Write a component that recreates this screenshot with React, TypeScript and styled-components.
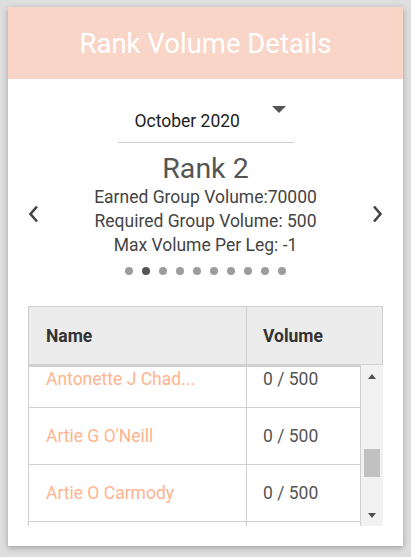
import { useEffect, useRef } from "react";
import styled, { createGlobalStyle } from "styled-components";

// the 4th row is only peeking in at the bottom edge, so it carries no text
const rows = [
    { id: 1, name: "Antonette J Chad...", volume: "0 / 500" },
    { id: 2, name: "Artie G O'Neill", volume: "0 / 500" },
    { id: 3, name: "Artie O Carmody", volume: "0 / 500" },
    { id: 4, name: "", volume: "" },
];

const DOTS = 10;
const ACTIVE_DOT = 1;

export default function App() {
    const bodyRef = useRef<HTMLDivElement>(null);

    useEffect(() => {
        if (bodyRef.current) {
            bodyRef.current.scrollTop = 16;
        }
    }, []);

    return (
        <>
            <GlobalStyle />
            <Card>
                <Header>
                    <Title>Rank Volume Details</Title>
                </Header>
                <Content>
                    <Select>
                        <SelectValue>October 2020</SelectValue>
                        <SelectArrow />
                    </Select>
                    <Carousel>
                        <NavButton aria-label="previous">
                            <svg width="12" height="18" viewBox="0 0 12 18">
                                <polyline points="9,1.5 2.5,9 9,16.5" fill="none" stroke="#444" strokeWidth="2.6" />
                            </svg>
                        </NavButton>
                        <Slide>
                            <RankName>Rank 2</RankName>
                            <InfoLine>Earned Group Volume:70000</InfoLine>
                            <InfoLine>Required Group Volume: 500</InfoLine>
                            <InfoLine>Max Volume Per Leg: -1</InfoLine>
                            <Dots>
                                {Array.from({ length: DOTS }).map((_, i) => (
                                    <Dot key={i} $active={i === ACTIVE_DOT} />
                                ))}
                            </Dots>
                        </Slide>
                        <NavButton aria-label="next">
                            <svg width="12" height="18" viewBox="0 0 12 18">
                                <polyline points="3,1.5 9.5,9 3,16.5" fill="none" stroke="#444" strokeWidth="2.6" />
                            </svg>
                        </NavButton>
                    </Carousel>
                    <Table>
                        <HeadRow>
                            <HeadCell $divider>Name</HeadCell>
                            <HeadCell>Volume</HeadCell>
                        </HeadRow>
                        <BodyWrap>
                            <Body ref={bodyRef}>
                                {rows.map((row) => (
                                    <Row key={row.id}>
                                        <NameCell>{row.name}</NameCell>
                                        <VolumeCell>{row.volume}</VolumeCell>
                                    </Row>
                                ))}
                            </Body>
                            <Scrollbar>
                                <ScrollButton>
                                    <ArrowUp />
                                </ScrollButton>
                                <Track>
                                    <Thumb $offset={62} />
                                </Track>
                                <ScrollButton>
                                    <ArrowDown />
                                </ScrollButton>
                            </Scrollbar>
                        </BodyWrap>
                    </Table>
                </Content>
            </Card>
        </>
    );
}

const GlobalStyle = createGlobalStyle`
    html, body {
        margin: 0;
        padding: 0;
        background: #dedede;
        font-family: Roboto, "Liberation Sans", sans-serif;
    }
    body {
        padding: 7px 8px 9px 8px;
    }
`;

const Card = styled.div`
    width: 395px;
    background: #fff;
    box-shadow: 0 2px 6px rgba(0, 0, 0, 0.28);
`;

const Header = styled.div`
    height: 72px;
    background: #f8d5c7;
    display: flex;
    align-items: center;
    justify-content: center;
`;

const Title = styled.h1`
    margin: 0;
    font-size: 27.5px;
    font-weight: 400;
    color: #fff;
`;

const Content = styled.div`
    padding: 0 20px 20px;
    display: flex;
    flex-direction: column;
    align-items: stretch;
`;

const Select = styled.div`
    position: relative;
    align-self: center;
    width: 176px;
    margin-top: 18px;
    padding: 12px 0 9px 17px;
    box-sizing: border-box;
    border-bottom: 1px solid #cfcfcf;
`;

const SelectValue = styled.div`
    font-size: 17.5px;
    line-height: 24px;
    color: #222;
`;

const SelectArrow = styled.span`
    position: absolute;
    right: 8px;
    top: 9px;
    width: 0;
    height: 0;
    border-left: 7px solid transparent;
    border-right: 7px solid transparent;
    border-top: 7px solid #555;
`;

const Carousel = styled.div`
    display: flex;
    align-items: center;
    justify-content: space-between;
    height: 158px;
    padding: 10px 0 26px;
    box-sizing: border-box;
`;

const NavButton = styled.button`
    border: 0;
    background: none;
    padding: 0;
    width: 12px;
    height: 18px;
    display: flex;
    cursor: pointer;
`;

const Slide = styled.div`
    display: flex;
    flex-direction: column;
    align-items: center;
    color: #444;
`;

const RankName = styled.div`
    font-size: 28.5px;
    line-height: 32px;
    color: #555;
`;

const InfoLine = styled.div`
    font-size: 17.5px;
    line-height: 24px;
`;

const Dots = styled.div`
    display: flex;
    gap: 9px;
    margin-top: 10px;
`;

const Dot = styled.span<{ $active?: boolean }>`
    width: 8px;
    height: 8px;
    border-radius: 50%;
    background: ${(p) => (p.$active ? "#555" : "#9d9d9d")};
`;

const Table = styled.div`
    margin-top: 5px;
    display: flex;
    flex-direction: column;
`;

const HeadRow = styled.div`
    display: grid;
    grid-template-columns: 218px 1fr;
    height: 57px;
    background: #ececec;
    border: 1px solid #d0d0d0;
`;

const HeadCell = styled.div<{ $divider?: boolean }>`
    display: flex;
    align-items: center;
    padding-left: ${(p) => (p.$divider ? "17px" : "16px")};
    font-size: 17.5px;
    font-weight: 700;
    color: #333;
    border-right: ${(p) => (p.$divider ? "1px solid #d0d0d0" : "none")};
`;

const BodyWrap = styled.div`
    display: flex;
    height: 161px;
`;

const Body = styled.div`
    width: 333px;
    box-sizing: border-box;
    border-top: 2px solid #d0d0d0;
    border-left: 1px solid #d0d0d0;
    border-right: 1px solid #d0d0d0;
    overflow-y: scroll;
    scrollbar-width: none;
    &::-webkit-scrollbar {
        display: none;
    }
`;

const Row = styled.div`
    display: grid;
    grid-template-columns: 218px 1fr;
    height: 57px;
    box-sizing: border-box;
    border-bottom: 1px solid #d0d0d0;
    font-size: 17.5px;
`;

const NameCell = styled.div`
    display: flex;
    align-items: center;
    padding-left: 17px;
    color: #ffb48e;
    border-right: 1px solid #d0d0d0;
    white-space: nowrap;
`;

const VolumeCell = styled.div`
    display: flex;
    align-items: center;
    padding-left: 16px;
    color: #555;
`;

const Scrollbar = styled.div`
    width: 22px;
    background: #f1f1f1;
    display: flex;
    flex-direction: column;
`;

const ScrollButton = styled.div`
    height: 22px;
    display: flex;
    align-items: center;
    justify-content: center;
`;

const ArrowUp = styled.span`
    width: 0;
    height: 0;
    border-left: 4px solid transparent;
    border-right: 4px solid transparent;
    border-bottom: 5px solid #505050;
`;

const ArrowDown = styled.span`
    width: 0;
    height: 0;
    border-left: 4px solid transparent;
    border-right: 4px solid transparent;
    border-top: 5px solid #505050;
`;

const Track = styled.div`
    flex: 1;
    display: flex;
    flex-direction: column;
    align-items: center;
`;

const Thumb = styled.div<{ $offset: number }>`
    width: 16px;
    height: 28px;
    margin-top: ${(p) => p.$offset}px;
    background: #c1c1c1;
`;
